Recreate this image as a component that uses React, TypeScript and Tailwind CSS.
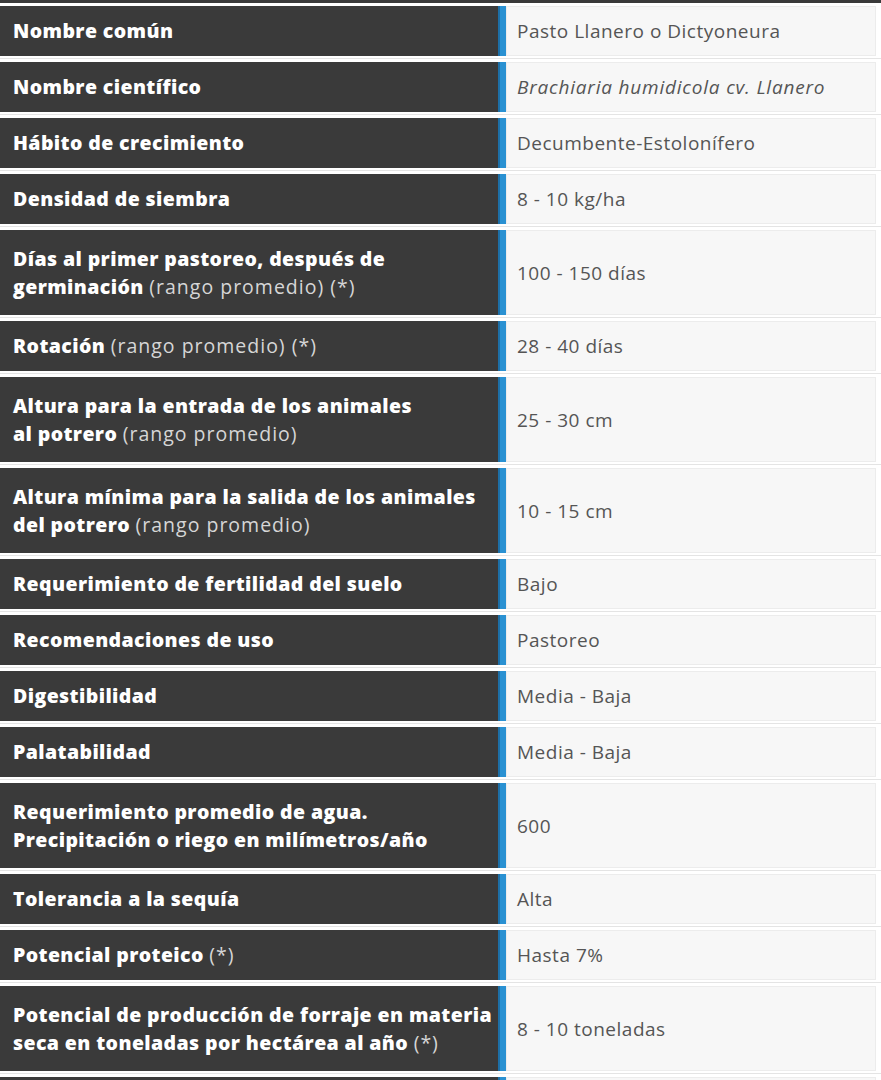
import React from "react";

type Row = {
  label: React.ReactNode;
  value: React.ReactNode;
  tall?: boolean;
};

const Note = ({ children }: { children: React.ReactNode }) => (
  <span className="font-normal tracking-[1px] text-[#d6d6d6]">{children}</span>
);

const ROWS: Row[] = [
  { label: "Nombre común", value: "Pasto Llanero o Dictyoneura" },
  { label: "Nombre científico", value: <em className="tracking-[0.8px]">Brachiaria humidicola cv. Llanero</em> },
  { label: "Hábito de crecimiento", value: "Decumbente-Estolonífero" },
  { label: "Densidad de siembra", value: "8 - 10 kg/ha" },
  {
    label: (
      <>
        Días al primer pastoreo, después de
        <br />
        germinación <Note>(rango promedio) (*)</Note>
      </>
    ),
    value: "100 - 150 días",
    tall: true,
  },
  {
    label: (
      <>
        Rotación <Note>(rango promedio) (*)</Note>
      </>
    ),
    value: "28 - 40 días",
  },
  {
    label: (
      <>
        Altura para la entrada de los animales
        <br />
        al potrero <Note>(rango promedio)</Note>
      </>
    ),
    value: "25 - 30 cm",
    tall: true,
  },
  {
    label: (
      <>
        Altura mínima para la salida de los animales
        <br />
        del potrero <Note>(rango promedio)</Note>
      </>
    ),
    value: "10 - 15 cm",
    tall: true,
  },
  { label: "Requerimiento de fertilidad del suelo", value: "Bajo" },
  { label: "Recomendaciones de uso", value: "Pastoreo" },
  { label: "Digestibilidad", value: "Media - Baja" },
  { label: "Palatabilidad", value: "Media - Baja" },
  {
    label: (
      <>
        Requerimiento promedio de agua.
        <br />
        Precipitación o riego en milímetros/año
      </>
    ),
    value: "600",
    tall: true,
  },
  { label: "Tolerancia a la sequía", value: "Alta" },
  {
    label: (
      <>
        Potencial proteico <Note>(*)</Note>
      </>
    ),
    value: "Hasta 7%",
  },
  {
    label: (
      <>
        Potencial de producción de forraje en materia
        <br />
        seca en toneladas por hectárea al año <Note>(*)</Note>
      </>
    ),
    value: "8 - 10 toneladas",
    tall: true,
  },
];

function Gap() {
  return (
    <div className="h-[6px] pt-[2px]">
      <div className="h-px bg-[#e4e4e4]" />
    </div>
  );
}

function TableRow({ row }: { row: Row }) {
  return (
    <div className={`flex ${row.tall ? "h-[85px]" : "h-[50px]"}`}>
      <div className="flex w-[498px] shrink-0 items-center overflow-hidden whitespace-nowrap bg-[#3a3a3a] pl-[13px] text-[19.5px] font-extrabold leading-[28px] tracking-[0.4px] text-white">
        <div>{row.label}</div>
      </div>
      <div className="w-[2px] shrink-0 bg-[#1d6fa6]" />
      <div className="w-[6px] shrink-0 bg-[#2a91d2]" />
      <div className="flex w-[370px] shrink-0 items-center border border-[#ececec] bg-[#f7f7f7] pl-[10px] text-[19px] leading-[28px] tracking-[0.5px] text-[#555]">
        {row.value}
      </div>
    </div>
  );
}

export default function App() {
  return (
    <div className="h-[1080px] w-[881px] overflow-hidden bg-white font-['Open_Sans','Noto_Sans',sans-serif]">
      <div className="h-[3px] bg-[#3a3a3a]" />
      <div className="h-[3px]" />
      {ROWS.map((r, i) => (
        <React.Fragment key={i}>
          <TableRow row={r} />
          <Gap />
        </React.Fragment>
      ))}
      <TableRow row={{ label: "", value: "" }} />
    </div>
  );
}
